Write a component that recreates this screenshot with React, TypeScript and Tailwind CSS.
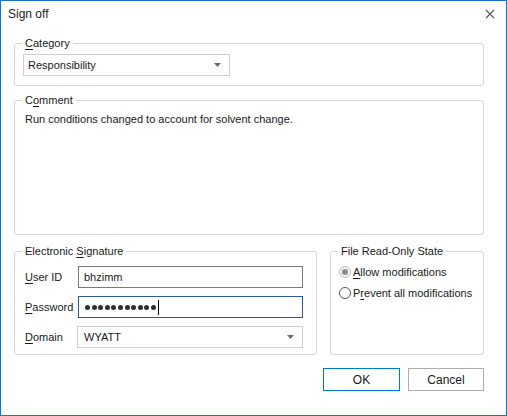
import React from "react";

const Arrow = () => (
  <svg width="7" height="4" viewBox="0 0 7 4" className="shrink-0">
    <path d="M0 0h7L3.5 4z" fill="#6b6b6b" />
  </svg>
);

const Key = ({ children }: { children: React.ReactNode }) => (
  <span className="underline underline-offset-[2px]">{children}</span>
);

const Radio = ({ checked }: { checked?: boolean }) => (
  <span
    className={`flex h-[12px] w-[12px] shrink-0 items-center justify-center rounded-full border ${
      checked ? "border-[#bcbcbc] bg-[#f4f4f4]" : "border-[#555]"
    }`}
  >
    {checked && <span className="h-[6px] w-[6px] rounded-full bg-[#8c8c8c]" />}
  </span>
);

export default function App() {
  return (
    <div
      className="flex h-[416px] w-[507px] flex-col border border-[#1a6fce] bg-white text-[11px] text-[#1a1a1a]"
      style={{ fontFamily: '"Liberation Sans", Arial, sans-serif' }}
    >
      <div className="flex h-[26px] shrink-0 items-center justify-between pl-[7px] pr-[11px]">
        <span className="text-[12px] text-[#222]">Sign off</span>
        <svg width="10" height="10" viewBox="0 0 10 10">
          <path d="M1 1l8 8M9 1l-8 8" stroke="#555" strokeWidth="1.1" />
        </svg>
      </div>

      <div className="flex flex-1 flex-col pl-[13px] pr-[22px] pt-[8px]">
        <fieldset className="rounded-[3px] border border-[#d6d6d6] px-[8px] pb-[9px]">
          <legend className="ml-[-1px] mr-auto px-[3px] leading-[16px]">
            <Key>C</Key>ategory
          </legend>
          <div className="mt-[3px] flex h-[22px] w-[207px] items-center justify-between border border-[#d0d0d0] pl-[4px] pr-[8px]">
            <span>Responsibility</span>
            <Arrow />
          </div>
        </fieldset>

        <fieldset className="mt-[6px] rounded-[3px] border border-[#d6d6d6] px-[10px]">
          <legend className="ml-[-3px] mr-auto px-[3px] leading-[16px]">
            C<Key>o</Key>mment
          </legend>
          <div className="h-[126px] pt-[3px] leading-[16px]">
            Run conditions changed to account for solvent change.
          </div>
        </fieldset>

        <div className="mt-[8px] flex gap-[13px]">
          <fieldset className="w-[303px] rounded-[3px] border border-[#d6d6d6] pl-[9px] pr-[13px] pb-[6px]">
            <legend className="ml-[-2px] mr-auto px-[3px] leading-[16px]">
              Electronic <Key>S</Key>ignature
            </legend>
            <div className="flex flex-col gap-[8px] pt-[7px]">
              <div className="flex items-center">
                <span className="w-[54px] pl-[1px]">
                  <Key>U</Key>ser ID
                </span>
                <div className="flex h-[22px] flex-1 items-center border border-[#7a7a7a] pl-[5px]">
                  bhzimm
                </div>
              </div>
              <div className="flex items-center">
                <span className="w-[54px] pl-[1px]">
                  <Key>P</Key>assword
                </span>
                <div className="flex h-[22px] flex-1 items-center border border-[#2b5a9c] pl-[6px]">
                  <div className="flex gap-[1.6px]">
                    {Array.from({ length: 11 }).map((_, i) => (
                      <span key={i} className="h-[5px] w-[5px] rounded-full bg-[#2f2f2f]" />
                    ))}
                  </div>
                  <span className="ml-[2px] h-[15px] w-[1px] bg-black" />
                </div>
              </div>
              <div className="flex items-center">
                <span className="w-[53px] pl-[1px]">
                  <Key>D</Key>omain
                </span>
                <div className="flex h-[22px] flex-1 items-center justify-between border border-[#d0d0d0] pl-[6px] pr-[8px]">
                  <span>WYATT</span>
                  <Arrow />
                </div>
              </div>
            </div>
          </fieldset>

          <fieldset className="flex-1 rounded-[3px] border border-[#d6d6d6] pl-[8px]">
            <legend className="ml-[-1px] mr-auto px-[3px] leading-[16px]">File Read-Only State</legend>
            <div className="flex flex-col gap-[5px] pt-[5px]">
              <label className="flex h-[16px] items-center gap-[2px] whitespace-nowrap">
                <Radio checked />
                <span>
                  <Key>A</Key>llow modifications
                </span>
              </label>
              <label className="flex h-[16px] items-center gap-[2px] whitespace-nowrap">
                <Radio />
                <span>
                  P<Key>r</Key>event all modifications
                </span>
              </label>
            </div>
          </fieldset>
        </div>

        <div className="mt-[13px] flex justify-end gap-[8px]">
          <button className="h-[23px] w-[77px] border border-[#0078d7] bg-white text-[12px]">OK</button>
          <button className="h-[23px] w-[76px] border border-[#adadad] bg-white text-[12px]">Cancel</button>
        </div>
      </div>
    </div>
  );
}
